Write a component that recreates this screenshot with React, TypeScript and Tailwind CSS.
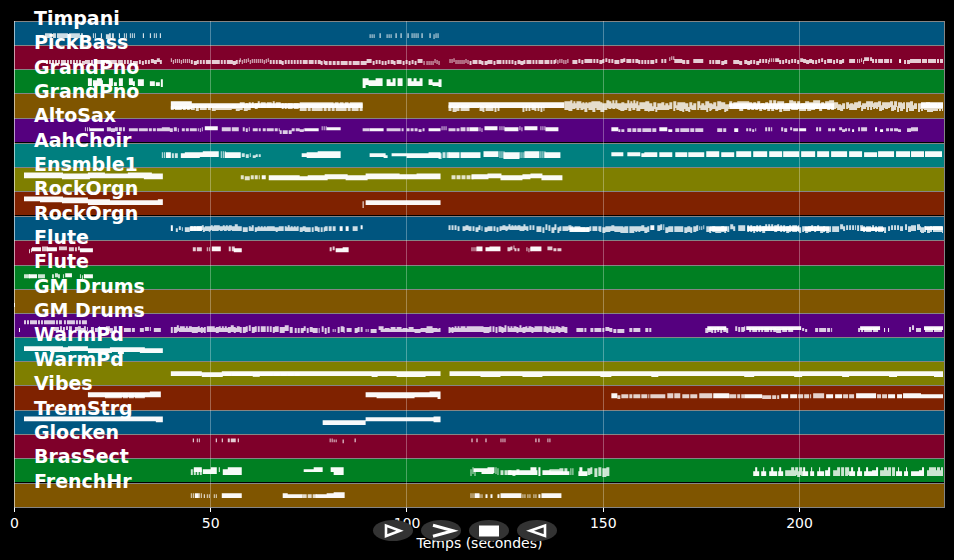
import React from "react";

// [from, to, top, bottom, step?, jitter?] - without a step the run is one solid note,
// with a step it is a series of short notes whose pitch wanders by the jitter
type Run = [number, number, number, number, number?, number?];

interface Track {
  name: string;
  color: string;
  runs: Run[];
}

const START = 14;
const WIDTH = 931;
const DURATION = 237.2;
const MARKS = [0, 50, 100, 150, 200];

const TRACKS: Track[] = [
  {
    name: "Timpani",
    color: "bg-[#00557f]",
    runs: [
      [45, 83, 11, 15, 4, 1], [93, 96, 11, 15, 2, 1], [101, 102, 11, 15], [106, 115, 11, 15, 3, 1],
      [119, 120, 11, 15], [124, 127, 11, 15, 2, 1], [130, 135, 11, 15, 2, 1], [143, 144, 11, 15],
      [150, 151, 11, 15], [154, 158, 11, 15, 2, 1], [160, 161, 11, 15],
      [370, 376, 12, 15, 2, 1], [380, 381, 11, 15], [387, 393, 12, 15, 2, 1], [396, 397, 11, 15], [401, 402, 11, 15],
      [408, 409, 11, 15], [412, 419, 11, 15, 2, 1], [422, 423, 11, 15], [430, 431, 11, 15], [434, 440, 11, 15, 2, 1],
    ],
  },
  {
    name: "PickBass",
    color: "bg-[#7f002a]",
    runs: [
      [46, 150, 14, 17, 3, 1], [151, 162, 13, 16, 3, 2], [171, 191, 13, 16, 2, 2], [191, 240, 14, 17, 3, 1],
      [240, 270, 13, 16, 2, 2], [270, 325, 14, 17, 3, 1], [325, 360, 15, 18, 4, 0], [361, 425, 14, 17, 3, 2],
      [427, 441, 14, 17, 2, 2], [450, 470, 13, 16, 2, 2], [470, 556, 14, 17, 3, 1], [556, 569, 13, 16, 2, 2],
      [573, 655, 13, 16, 3, 2], [656, 659, 13, 16, 3], [662, 668, 13, 16, 3, 1], [670, 675, 10, 13, 2, 1],
      [675, 690, 13, 16, 4, 1], [694, 704, 13, 16, 5, 1], [710, 728, 14, 17, 3, 1], [734, 743, 14, 17, 3, 1],
      [745, 770, 14, 17, 3, 2], [770, 777, 12, 15, 2, 1], [777, 845, 13, 16, 3, 2], [850, 856, 13, 16, 4],
      [858, 865, 13, 16, 2, 2], [865, 873, 11, 14, 3], [873, 893, 13, 16, 3, 1], [900, 902, 13, 16],
      [905, 944, 13, 16, 3, 1],
    ],
  },
  {
    name: "GrandPno",
    color: "bg-[#007f22]",
    runs: [
      [88, 92, 8, 15], [93, 103, 10, 15], [97, 102, 8, 14], [109, 113, 8, 15], [114, 117, 12, 15], [119, 123, 8, 15],
      [129, 133, 8, 14], [133, 135, 11, 15], [138, 144, 9, 15], [150, 155, 11, 15], [156, 160, 12, 15], [161, 163, 9, 16],
      [363, 366, 8, 17], [366, 369, 8, 14], [369, 378, 10, 15], [376, 383, 8, 15], [387, 391, 9, 15], [391, 394, 12, 15],
      [393, 396, 8, 15], [398, 403, 8, 15], [408, 412, 8, 15], [411, 423, 11, 15], [414, 417, 8, 15],
      [420, 423, 8, 15], [429, 433, 9, 14], [433, 439, 12, 15], [439, 442, 9, 16],
    ],
  },
  {
    name: "GrandPno",
    color: "bg-[#7f5500]",
    runs: [
      [171, 192, 7, 14], [171, 192, 12, 15, 4, 1], [192, 363, 9, 13], [192, 252, 11, 15, 4, 2], [240, 300, 8, 13, 3, 2],
      [300, 363, 8, 12, 5, 1], [300, 363, 12, 16, 4, 1], [449, 480, 8, 13], [449, 470, 11, 16, 4, 1], [480, 565, 8, 13],
      [480, 500, 11, 16, 3, 2], [523, 545, 11, 16, 3, 2], [565, 650, 9, 13, 5], [565, 650, 7, 13, 3, 3],
      [565, 650, 10, 15, 4, 3], [650, 730, 8, 14, 4, 3], [650, 730, 11, 15, 3, 4], [730, 835, 9, 14],
      [730, 835, 7, 12, 4, 3], [740, 835, 11, 15, 4, 3], [835, 944, 8, 13, 4, 3], [835, 944, 10, 15, 3, 4],
      [922, 944, 8, 13],
    ],
  },
  {
    name: "AltoSax",
    color: "bg-[#55007f]",
    runs: [
      [85, 90, 8, 11, 2, 1], [90, 104, 9, 11], [107, 125, 8, 11, 4, 1], [129, 148, 9, 11, 5], [149, 162, 9, 11, 4],
      [162, 179, 8, 11, 4, 1], [182, 199, 9, 11, 4, 1], [200, 203, 8, 11, 2, 1], [205, 218, 7, 10],
      [222, 239, 8, 11, 5], [243, 250, 8, 11, 3, 1], [253, 262, 9, 11, 3, 2], [263, 280, 9, 11, 4, 1],
      [280, 292, 10, 13, 3, 2], [292, 305, 9, 11, 4, 1], [305, 319, 9, 11], [322, 327, 7, 10, 2, 1], [327, 341, 8, 10],
      [363, 370, 9, 11, 3], [370, 384, 9, 11], [387, 404, 9, 11, 5], [407, 425, 9, 11, 4, 1], [429, 441, 9, 11],
      [442, 448, 7, 10, 2, 1], [449, 460, 9, 11, 4, 1], [461, 470, 8, 11, 3, 1], [470, 479, 8, 11],
      [480, 484, 8, 11, 2, 2], [485, 498, 7, 10], [500, 505, 7, 10, 2, 1], [505, 519, 8, 11], [520, 524, 8, 11, 2, 2],
      [525, 538, 7, 10], [541, 546, 7, 10, 2, 1], [546, 559, 8, 11], [612, 619, 8, 11], [619, 625, 10, 12, 3],
      [628, 657, 9, 12, 5], [660, 668, 8, 11], [669, 673, 10, 12], [676, 704, 9, 12, 5],
      [718, 727, 9, 12, 3, 1], [735, 739, 9, 12], [747, 757, 9, 11, 3, 1], [766, 773, 8, 11, 3, 1],
      [782, 788, 8, 11, 3, 1], [791, 800, 9, 11, 3, 2], [800, 807, 9, 11], [817, 822, 8, 11, 3, 1],
      [829, 836, 9, 11, 4, 1], [840, 852, 9, 11, 3, 2], [853, 855, 10, 12], [859, 868, 8, 11, 3, 1],
      [876, 878, 8, 11], [881, 884, 10, 12], [887, 903, 9, 11, 4, 1], [908, 919, 8, 11, 4, 1],
    ],
  },
  {
    name: "AahChoir",
    color: "bg-[#007f7f]",
    runs: [
      [162, 166, 8, 13, 2, 1], [166, 171, 8, 13], [172, 178, 9, 13, 3], [181, 200, 9, 13], [185, 205, 8, 12],
      [203, 219, 7, 12], [221, 226, 7, 13, 2, 1], [225, 241, 8, 13], [242, 251, 9, 12, 4, 1], [253, 261, 10, 12, 3, 1],
      [302, 310, 9, 12], [307, 320, 8, 13], [318, 341, 7, 13], [370, 386, 9, 12], [384, 388, 11, 13],
      [392, 408, 9, 11], [407, 429, 9, 13], [429, 441, 8, 13], [439, 450, 8, 13, 4, 2], [449, 460, 8, 13],
      [461, 481, 8, 13], [484, 499, 7, 12], [500, 505, 7, 13, 2, 1], [504, 520, 8, 14], [520, 525, 8, 13, 2, 1],
      [525, 540, 7, 13], [541, 546, 7, 13, 2, 1], [545, 561, 8, 13], [612, 624, 8, 11], [628, 641, 8, 11],
      [642, 646, 9, 12], [645, 658, 8, 12], [660, 673, 8, 12], [676, 688, 8, 12], [689, 705, 8, 12], [707, 720, 7, 12],
      [722, 735, 8, 12], [737, 752, 7, 12], [754, 768, 7, 12], [770, 783, 7, 12], [784, 800, 7, 12],
      [802, 816, 7, 12], [818, 830, 7, 12], [832, 848, 7, 12], [850, 863, 7, 12], [865, 878, 8, 12],
      [879, 895, 7, 12], [897, 911, 7, 12], [912, 925, 7, 12], [926, 943, 7, 12],
    ],
  },
  {
    name: "Ensmble1",
    color: "bg-[#7f7f00]",
    runs: [
      [24, 63, 4, 9], [62, 90, 5, 10], [88, 105, 4, 9], [104, 130, 5, 9], [128, 152, 4, 9], [144, 163, 5, 10],
      [241, 250, 7, 10, 4, 2], [251, 260, 7, 10, 4, 1], [262, 266, 7, 10], [269, 300, 7, 11], [296, 312, 8, 11],
      [308, 328, 7, 11], [325, 348, 6, 10], [346, 368, 7, 11], [366, 400, 5, 10], [398, 421, 6, 10], [417, 441, 5, 10],
      [452, 474, 7, 10, 5], [472, 482, 6, 10], [481, 489, 6, 10], [488, 502, 5, 9], [501, 523, 7, 11],
      [523, 531, 6, 10], [531, 543, 5, 9], [542, 563, 7, 11],
    ],
  },
  {
    name: "RockOrgn",
    color: "bg-[#7f2200]",
    runs: [
      [24, 63, 4, 8], [40, 62, 5, 9], [62, 88, 5, 10], [88, 110, 7, 12], [108, 163, 8, 12], [158, 163, 7, 12],
      [363, 364, 9, 15], [366, 441, 8, 12], [372, 408, 9, 12], [436, 441, 8, 12],
    ],
  },
  {
    name: "RockOrgn",
    color: "bg-[#00557f]",
    runs: [
      [171, 173, 8, 13], [176, 183, 10, 13, 3, 2], [185, 210, 9, 13, 3, 2], [190, 202, 9, 13], [202, 240, 8, 12, 3, 2],
      [212, 240, 9, 13, 4, 1], [240, 325, 9, 13, 3, 2], [250, 310, 10, 13, 5, 1], [325, 337, 9, 13, 4], [340, 343, 9, 13],
      [346, 349, 9, 13], [353, 358, 9, 13, 3], [361, 363, 8, 11], [449, 461, 8, 12, 3, 2], [463, 472, 8, 12, 3, 2],
      [473, 483, 8, 12, 3, 3], [485, 500, 9, 13, 3, 2], [500, 530, 9, 12, 5, 1], [500, 535, 8, 12, 3, 2],
      [537, 560, 8, 13, 3, 3], [560, 600, 9, 13, 3, 2], [570, 590, 10, 14], [600, 650, 9, 14, 3, 2], [610, 648, 9, 13, 5, 1],
      [651, 655, 8, 12], [658, 665, 8, 13, 3, 2], [666, 684, 9, 14, 3, 2], [685, 699, 9, 14, 3, 2],
      [700, 705, 8, 11, 2, 2], [707, 730, 9, 14, 3, 2], [710, 728, 9, 13], [731, 737, 8, 12, 3, 2], [739, 746, 8, 13, 3, 2],
      [748, 800, 9, 13], [748, 800, 8, 14, 3, 2], [800, 840, 9, 14, 3, 2], [805, 830, 9, 13], [841, 857, 8, 12, 3, 2],
      [858, 888, 9, 14, 3, 2], [862, 885, 10, 13], [889, 904, 8, 12, 3, 2], [906, 922, 8, 13, 3, 2],
      [922, 944, 9, 14, 3, 2], [926, 944, 9, 12],
    ],
  },
  {
    name: "Flute",
    color: "bg-[#7f002a]",
    runs: [
      [29, 33, 7, 10, 2, 1], [32, 41, 6, 9], [42, 48, 6, 10, 3, 2], [47, 57, 6, 9], [59, 67, 5, 8, 4, 1],
      [69, 80, 6, 9, 3, 2], [80, 93, 7, 10], [193, 202, 6, 9, 4], [207, 211, 6, 9, 2], [212, 221, 5, 9],
      [229, 235, 5, 9, 3, 2], [234, 242, 7, 10], [330, 336, 5, 8, 3, 2], [336, 349, 7, 10], [343, 349, 6, 10],
      [472, 477, 6, 9, 2], [477, 483, 5, 9], [486, 491, 6, 9], [490, 501, 5, 9], [508, 515, 5, 8, 3, 2],
      [515, 521, 7, 9, 3, 1], [527, 532, 6, 9, 2, 1], [531, 542, 5, 9], [548, 554, 5, 8, 3, 2], [554, 562, 7, 9, 4, 1],
    ],
  },
  {
    name: "Flute",
    color: "bg-[#007f22]",
    runs: [
      [24, 30, 8, 11, 3, 2], [29, 37, 8, 11], [38, 46, 8, 11, 4, 1], [52, 60, 8, 11, 3, 2], [63, 67, 8, 11, 2, 2],
      [66, 72, 7, 10], [80, 85, 8, 11, 2, 2], [84, 93, 8, 11],
    ],
  },
  { name: "GM Drums", color: "bg-[#7f5500]", runs: [[14, 15, 13, 16]] },
  {
    name: "GM Drums",
    color: "bg-[#55007f]",
    runs: [
      [24, 37, 6, 9, 3], [38, 62, 6, 9, 3], [64, 88, 6, 9, 3], [19, 20, 14, 17], [54, 72, 13, 16, 3, 2],
      [75, 88, 13, 16, 3, 3], [91, 100, 13, 16, 4, 2], [106, 117, 12, 16, 4, 3], [124, 136, 13, 16, 4, 3],
      [140, 151, 13, 16, 5, 3], [154, 161, 13, 16, 4, 3], [171, 240, 12, 17, 3, 2], [175, 240, 14, 17, 4, 1],
      [240, 275, 12, 17, 3, 2], [275, 293, 12, 17, 5, 2], [295, 320, 13, 17, 3, 3], [322, 330, 12, 17, 3, 3],
      [333, 336, 15, 17, 2], [338, 345, 12, 17, 3, 2], [347, 352, 14, 17, 4], [355, 363, 13, 17, 3, 3],
      [366, 369, 15, 17, 2], [371, 377, 14, 17, 3, 2], [379, 441, 13, 16, 6, 3], [381, 441, 15, 17, 9, 1],
      [449, 481, 12, 17, 3, 1], [449, 480, 14, 17, 4, 1],
      [481, 568, 12, 17, 3, 2], [500, 565, 14, 17, 4, 1], [577, 587, 14, 17, 4], [591, 605, 14, 17, 4, 1],
      [606, 626, 14, 17, 4, 2], [630, 641, 14, 17, 4, 1], [646, 652, 14, 17, 4], [706, 729, 13, 17, 3, 2],
      [708, 727, 12, 15], [736, 746, 12, 16, 3, 2], [747, 802, 12, 15], [750, 795, 14, 17, 3, 1],
      [803, 809, 14, 16, 3, 2], [816, 833, 14, 17, 4, 1], [859, 880, 14, 17, 3, 1], [861, 881, 12, 15],
      [885, 886, 14, 17], [889, 890, 14, 17], [910, 916, 12, 16, 3, 2], [917, 923, 14, 17, 3, 1],
      [925, 944, 12, 15], [926, 944, 14, 17, 3, 1],
    ],
  },
  {
    name: "WarmPd",
    color: "bg-[#007f7f]",
    runs: [
      [24, 63, 8, 12], [50, 70, 9, 13], [68, 88, 8, 12], [88, 112, 10, 14], [110, 145, 9, 13], [118, 124, 10, 15],
      [140, 163, 10, 14],
    ],
  },
  {
    name: "WarmPd",
    color: "bg-[#7f7f00]",
    runs: [
      [171, 202, 9, 13], [202, 223, 10, 14], [222, 320, 9, 13], [225, 300, 11, 13, 7, 1], [300, 441, 9, 13],
      [372, 378, 10, 14], [397, 426, 10, 14], [450, 944, 9, 13], [481, 501, 10, 14], [523, 543, 10, 14],
      [601, 612, 10, 14], [652, 659, 10, 14], [745, 755, 10, 14], [795, 803, 10, 14], [843, 850, 10, 14],
      [890, 898, 10, 14], [935, 944, 10, 14],
    ],
  },
  {
    name: "Vibes",
    color: "bg-[#7f2200]",
    runs: [
      [88, 103, 6, 10], [102, 140, 6, 10], [105, 145, 7, 11, 6, 1], [138, 152, 6, 10], [150, 161, 5, 10],
      [366, 378, 6, 10], [377, 415, 6, 11], [413, 432, 6, 10], [430, 441, 5, 10], [438, 441, 8, 12],
      [612, 618, 7, 11], [618, 635, 8, 11, 4, 1], [635, 650, 8, 11, 7], [651, 667, 8, 11, 8], [668, 682, 7, 11, 7],
      [683, 699, 8, 11, 8], [700, 714, 7, 11, 7], [714, 730, 7, 11], [730, 745, 8, 11, 4], [745, 763, 8, 11],
      [763, 780, 9, 12, 5, 1], [782, 789, 8, 11], [791, 798, 8, 11], [799, 812, 8, 11, 6], [814, 825, 7, 11, 5],
      [827, 834, 8, 11], [836, 843, 8, 11], [844, 856, 8, 11, 6], [857, 877, 7, 11], [878, 888, 8, 11, 5],
      [889, 896, 8, 11], [898, 903, 8, 11], [904, 922, 7, 11], [920, 944, 8, 11],
    ],
  },
  {
    name: "TremStrg",
    color: "bg-[#00557f]",
    runs: [
      [24, 163, 5, 9], [60, 140, 6, 9], [156, 163, 5, 10], [323, 366, 9, 13], [328, 362, 10, 13],
      [366, 441, 6, 9], [434, 441, 5, 10],
    ],
  },
  {
    name: "Glocken",
    color: "bg-[#7f002a]",
    runs: [
      [193, 194, 3, 6], [197, 200, 3, 6, 2], [216, 217, 3, 6], [222, 223, 3, 6], [228, 236, 3, 6, 3, 1], [238, 239, 3, 6],
      [330, 334, 3, 6, 2], [334, 338, 4, 6, 2, 1], [343, 344, 4, 7], [355, 356, 3, 6], [472, 473, 3, 6],
      [477, 478, 3, 6], [486, 487, 3, 6], [501, 507, 3, 6, 2], [536, 537, 3, 6], [539, 540, 3, 6], [548, 552, 3, 6, 2],
    ],
  },
  {
    name: "BrasSect",
    color: "bg-[#007f22]",
    runs: [
      [191, 202, 10, 15, 3, 1], [194, 202, 8, 12], [203, 217, 10, 14], [211, 217, 8, 14], [219, 220, 8, 12],
      [223, 229, 10, 15], [228, 242, 8, 12], [229, 242, 11, 15], [304, 317, 10, 12], [314, 323, 8, 12],
      [331, 344, 8, 12], [334, 344, 11, 15], [471, 476, 9, 15, 2, 2], [474, 488, 9, 12], [482, 494, 10, 14],
      [488, 495, 8, 13], [496, 500, 8, 14, 2, 2], [501, 520, 11, 15, 4, 2], [508, 538, 11, 15], [531, 537, 8, 14],
      [539, 541, 8, 16], [543, 551, 11, 15], [550, 568, 9, 14, 5, 2], [550, 570, 12, 15], [571, 575, 9, 15, 2, 2],
      [579, 588, 12, 16], [580, 583, 8, 14], [588, 593, 8, 14, 3, 2], [595, 611, 8, 16, 4, 2],
      [754, 760, 12, 16], [756, 758, 8, 14], [762, 767, 12, 16], [764, 765, 8, 14], [770, 778, 12, 16],
      [772, 774, 8, 14], [779, 784, 12, 16], [780, 782, 8, 14], [786, 803, 11, 16, 4, 1], [792, 803, 8, 15, 4, 1],
      [803, 809, 12, 16], [804, 806, 8, 13], [811, 815, 12, 16], [812, 813, 8, 14], [818, 825, 12, 16],
      [820, 821, 8, 14], [826, 831, 11, 16], [829, 831, 8, 15], [834, 850, 11, 16, 4, 1], [838, 850, 8, 15, 4, 1],
      [850, 856, 12, 16], [852, 854, 8, 14], [858, 863, 12, 16], [859, 861, 8, 14], [865, 875, 12, 16],
      [867, 869, 8, 14], [873, 879, 11, 16], [877, 879, 8, 14], [881, 897, 11, 16, 4, 1], [885, 897, 8, 15, 4, 1],
      [897, 903, 12, 16], [899, 900, 8, 14], [905, 909, 12, 16], [907, 908, 8, 14], [912, 923, 12, 16],
      [920, 925, 11, 16], [923, 925, 8, 14], [928, 944, 11, 16, 4, 1], [930, 944, 8, 15, 4, 1],
    ],
  },
  {
    name: "FrenchHr",
    color: "bg-[#7f5500]",
    runs: [
      [191, 195, 9, 13, 2], [195, 199, 9, 13], [199, 202, 9, 13, 2], [204, 205, 10, 13], [207, 210, 10, 13, 2],
      [214, 218, 10, 13, 2], [222, 242, 9, 13], [283, 288, 9, 13], [286, 303, 10, 13], [303, 318, 10, 13, 5],
      [316, 332, 10, 13], [327, 337, 9, 13], [334, 345, 8, 13], [471, 475, 9, 13, 2], [475, 480, 9, 13], [480, 483, 10, 13, 2],
      [486, 488, 10, 13], [491, 493, 10, 13], [498, 500, 10, 13], [501, 522, 9, 13], [523, 526, 10, 13, 2],
      [528, 531, 10, 13, 2], [534, 537, 10, 13, 2], [539, 541, 10, 13], [542, 562, 9, 13],
    ],
  },
];

// tracks that leave a dark seam under them
const SEAMS = [4, 7, 18];

const noise = (n: number) => {
  const v = Math.sin(n * 12.9898) * 43758.5453;
  return v - Math.floor(v);
};

const box = (x: number, top: number, w: number, h: number) => `M${x} ${top + 0.6}h${w}v${h + 1}h${-w}z`;

function runPath([from, to, top, bottom, step, jitter = 0]: Run) {
  if (!step) return box(from, top, to - from, bottom - top);
  let d = "";
  for (let x = from; x < to; x += step) {
    const shift = Math.round((noise(x + top) - 0.4) * jitter);
    // now and then a note is held until the next one
    const held = step > 2 && noise(x * 3 + top) > 0.6;
    const w = held ? step : Math.max(1, step - 1);
    d += box(x, top + shift, Math.min(w, to - x), bottom - top);
  }
  return d;
}

function TrackRow({ track, seam }: { track: Track; seam: boolean }) {
  const solid = track.runs.filter((r) => !r[4]).map(runPath).join("");
  const short = track.runs.filter((r) => r[4]).map(runPath).join("");
  return (
    <li
      className={`relative min-h-0 flex-1 border-t border-t-[#858585] ${track.color} ${
        seam ? "border-b border-b-black" : ""
      }`}
    >
      <svg
        viewBox={`${START} 0 ${WIDTH} 24`}
        preserveAspectRatio="none"
        className="block h-full w-full fill-white"
        aria-hidden="true"
      >
        <path d={solid} fillOpacity={0.97} />
        <path d={short} fillOpacity={0.8} />
      </svg>
    </li>
  );
}

const position = (seconds: number) => ({ left: `${(seconds / DURATION) * 100}%` });

const CONTROLS = [
  { label: "Lecture", icon: <path d="M13 5.500v10.500L27 10.700z" fill="none" strokeWidth="2.6" /> },
  { label: "Avance rapide", icon: <path d="M12 5.300 32 10.800 12 16.300" fill="none" strokeWidth="3" /> },
  { label: "Stop", icon: <path d="M10 5.500h20v11H10z" fill="white" stroke="none" /> },
  { label: "Retour", icon: <path d="M28 5.500v10.500L13 10.700z" fill="none" strokeWidth="2.6" /> },
];

export default function App() {
  return (
    <main className="flex h-screen min-h-96 flex-col bg-black pt-[21px] pr-[9px] pl-3.5 font-['DejaVu_Sans',sans-serif] text-white">
      <section className="relative flex min-h-0 flex-1 flex-col">
        <ul className="flex min-h-0 flex-1 flex-col border-r border-b border-[#858585]">
          {TRACKS.map((track, i) => (
            <TrackRow key={i} track={track} seam={SEAMS.includes(i)} />
          ))}
        </ul>
        {MARKS.map((mark) => (
          <span
            key={mark}
            style={position(mark)}
            className={`absolute inset-y-0 w-px ${mark === 0 ? "bg-white/60" : "bg-white/30"}`}
          />
        ))}
        {/* names straddle the top edge of their track */}
        <div className="absolute inset-0 flex flex-col">
          {TRACKS.map((track, i) => (
            <div key={i} className="min-h-0 flex-1">
              <span className="relative -top-[15px] block pl-5 text-[19px] leading-6 font-bold">{track.name}</span>
            </div>
          ))}
        </div>
      </section>

      <footer className="relative h-[52px] shrink-0 text-sm leading-4">
        {MARKS.map((mark) => (
          <span key={mark} style={position(mark)} className="absolute top-0 flex w-px flex-col items-center">
            <span className="h-1 w-px bg-white" />
            <span className="mt-[3px]">{mark}</span>
          </span>
        ))}
        <p className="pt-[27px] text-center">Temps (secondes)</p>
        <div className="absolute top-3 left-[38.6%] flex gap-2">
          {CONTROLS.map(({ label, icon }) => (
            <button key={label} type="button" aria-label={label} className="h-[21px] w-10 rounded-[50%] bg-[#333333]">
              <svg viewBox="0 0 40 21" className="block h-full w-full stroke-white" aria-hidden="true">
                {icon}
              </svg>
            </button>
          ))}
        </div>
      </footer>
    </main>
  );
}
